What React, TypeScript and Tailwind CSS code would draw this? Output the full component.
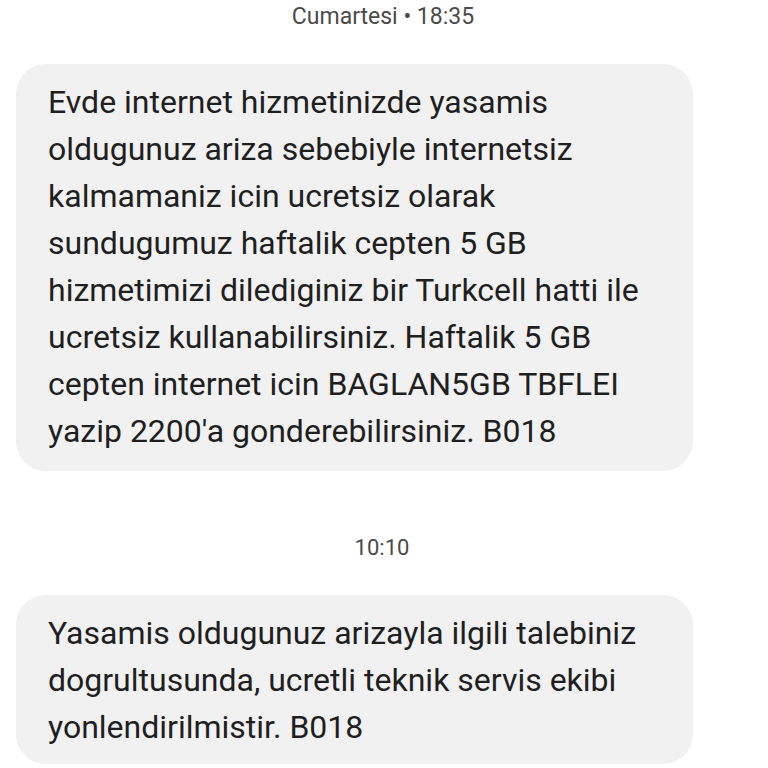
import React from "react";

const line1 = [
  "Evde internet hizmetinizde yasamis",
  "oldugunuz ariza sebebiyle internetsiz",
  "kalmamaniz icin ucretsiz olarak",
  "sundugumuz haftalik cepten 5 GB",
  "hizmetimizi dilediginiz bir Turkcell hatti ile",
  "ucretsiz kullanabilirsiniz. Haftalik 5 GB",
  "cepten internet icin BAGLAN5GB TBFLEI",
  "yazip 2200'a gonderebilirsiniz. B018",
];

const line2 = [
  "Yasamis oldugunuz arizayla ilgili talebiniz",
  "dogrultusunda, ucretli teknik servis ekibi",
  "yonlendirilmistir. B018",
];

function Bubble({ lines, pb }: { lines: string[]; pb: string }) {
  return (
    <div
      className={`ml-4 w-[677px] rounded-[30px] bg-[#f1f1f1] pl-8 pr-4 pt-[15px] ${pb} text-[32px] leading-[47px] text-[#1f1f1f]`}
    >
      {lines.map((l, i) => (
        <div key={i} className="whitespace-nowrap">
          {l}
        </div>
      ))}
    </div>
  );
}

export default function App() {
  return (
    <div
      className="w-[768px] h-[768px] overflow-hidden bg-white"
      style={{ fontFamily: "Roboto, 'Noto Sans', sans-serif" }}
    >
      <div className="pt-[2px] text-center text-[23px] leading-[30px] text-[#4a4a4a] pr-[2px]">
        Cumartesi • 18:35
      </div>
      <div className="mt-[32px]">
        <Bubble lines={line1} pb="pb-[16px]" />
      </div>
      <div className="mt-[62px] text-center text-[22px] leading-[30px] text-[#4a4a4a] pr-1">
        10:10
      </div>
      <div className="mt-[32px]">
        <Bubble lines={line2} pb="pb-[13px]" />
      </div>
    </div>
  );
}
